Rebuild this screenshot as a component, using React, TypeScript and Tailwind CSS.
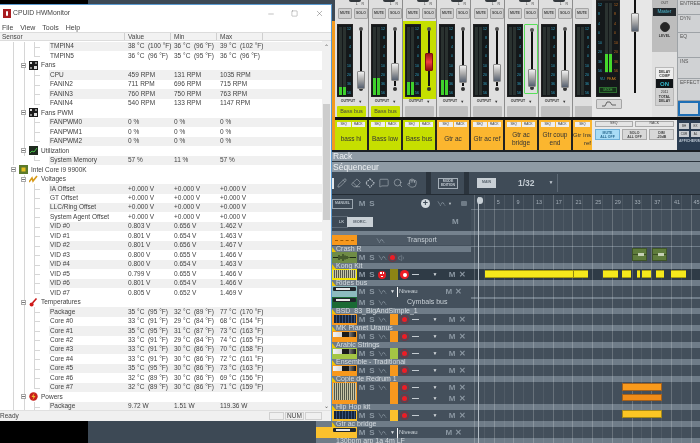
import { Eraser, Hand, MessageSquare, Minus, Pencil, Search, Square, Volume1, X } from 'lucide-react';

type Kind = 'root' | 'group' | 'leaf';

type SensorRow = {
  kind: Kind;
  name: string;
  values?: [string, string, string];
  shaded?: boolean;
  icon?: string;
  noSub?: boolean;
  lastLeaf?: boolean;
};

const t = (a: string, b: string, c: string): [string, string, string] => [a, b, c];

const rows: SensorRow[] = [
  { kind: 'leaf', name: 'TMPIN4', values: t('38 °C  (100 °F)', '36 °C  (96 °F)', '39 °C  (102 °F)'), shaded: true },
  { kind: 'leaf', name: 'TMPIN5', values: t('36 °C  (96 °F)', '35 °C  (95 °F)', '36 °C  (96 °F)'), lastLeaf: true },
  { kind: 'group', name: 'Fans', icon: 'chip' },
  { kind: 'leaf', name: 'CPU', values: t('459 RPM', '131 RPM', '1035 RPM'), shaded: true },
  { kind: 'leaf', name: 'FANIN2', values: t('711 RPM', '696 RPM', '715 RPM') },
  { kind: 'leaf', name: 'FANIN3', values: t('760 RPM', '750 RPM', '763 RPM'), shaded: true },
  { kind: 'leaf', name: 'FANIN4', values: t('540 RPM', '133 RPM', '1147 RPM'), lastLeaf: true },
  { kind: 'group', name: 'Fans PWM', icon: 'chip' },
  { kind: 'leaf', name: 'FANPWM0', values: t('0 %', '0 %', '0 %'), shaded: true },
  { kind: 'leaf', name: 'FANPWM1', values: t('0 %', '0 %', '0 %') },
  { kind: 'leaf', name: 'FANPWM2', values: t('0 %', '0 %', '0 %'), shaded: true, lastLeaf: true },
  { kind: 'group', name: 'Utilization', icon: 'util' },
  { kind: 'leaf', name: 'System Memory', values: t('57 %', '11 %', '57 %'), shaded: true, noSub: true, lastLeaf: true },
  { kind: 'root', name: 'Intel Core i9 9900K', icon: 'cpu', noSub: true },
  { kind: 'group', name: 'Voltages', icon: 'volt' },
  { kind: 'leaf', name: 'IA Offset', values: t('+0.000 V', '+0.000 V', '+0.000 V'), shaded: true },
  { kind: 'leaf', name: 'GT Offset', values: t('+0.000 V', '+0.000 V', '+0.000 V') },
  { kind: 'leaf', name: 'LLC/Ring Offset', values: t('+0.000 V', '+0.000 V', '+0.000 V'), shaded: true },
  { kind: 'leaf', name: 'System Agent Offset', values: t('+0.000 V', '+0.000 V', '+0.000 V') },
  { kind: 'leaf', name: 'VID #0', values: t('0.803 V', '0.656 V', '1.462 V'), shaded: true },
  { kind: 'leaf', name: 'VID #1', values: t('0.801 V', '0.654 V', '1.463 V') },
  { kind: 'leaf', name: 'VID #2', values: t('0.801 V', '0.656 V', '1.467 V'), shaded: true },
  { kind: 'leaf', name: 'VID #3', values: t('0.800 V', '0.655 V', '1.466 V') },
  { kind: 'leaf', name: 'VID #4', values: t('0.800 V', '0.654 V', '1.463 V'), shaded: true },
  { kind: 'leaf', name: 'VID #5', values: t('0.799 V', '0.655 V', '1.466 V') },
  { kind: 'leaf', name: 'VID #6', values: t('0.801 V', '0.654 V', '1.466 V'), shaded: true },
  { kind: 'leaf', name: 'VID #7', values: t('0.805 V', '0.652 V', '1.469 V'), lastLeaf: true },
  { kind: 'group', name: 'Temperatures', icon: 'temp' },
  { kind: 'leaf', name: 'Package', values: t('35 °C  (95 °F)', '32 °C  (89 °F)', '77 °C  (170 °F)'), shaded: true },
  { kind: 'leaf', name: 'Core #0', values: t('33 °C  (91 °F)', '29 °C  (84 °F)', '68 °C  (154 °F)') },
  { kind: 'leaf', name: 'Core #1', values: t('35 °C  (95 °F)', '31 °C  (87 °F)', '73 °C  (163 °F)'), shaded: true },
  { kind: 'leaf', name: 'Core #2', values: t('33 °C  (91 °F)', '29 °C  (84 °F)', '74 °C  (165 °F)') },
  { kind: 'leaf', name: 'Core #3', values: t('33 °C  (91 °F)', '30 °C  (86 °F)', '70 °C  (158 °F)'), shaded: true },
  { kind: 'leaf', name: 'Core #4', values: t('33 °C  (91 °F)', '30 °C  (86 °F)', '72 °C  (161 °F)') },
  { kind: 'leaf', name: 'Core #5', values: t('35 °C  (95 °F)', '30 °C  (86 °F)', '73 °C  (163 °F)'), shaded: true },
  { kind: 'leaf', name: 'Core #6', values: t('32 °C  (89 °F)', '30 °C  (86 °F)', '69 °C  (156 °F)') },
  { kind: 'leaf', name: 'Core #7', values: t('32 °C  (89 °F)', '30 °C  (86 °F)', '71 °C  (159 °F)'), shaded: true, lastLeaf: true },
  { kind: 'group', name: 'Powers', icon: 'power' },
  { kind: 'leaf', name: 'Package', values: t('9.72 W', '1.51 W', '119.36 W'), shaded: true },
];

const SensorIcon = ({ name }: { name?: string }) => {
  if (name === 'chip')
    return (
      <svg width="9" height="9" viewBox="0 0 9 9">
        <rect width="9" height="9" fill="#1c1c1c" />
        <rect x="1" y="1" width="2" height="2" fill="#dcdcdc" />
        <rect x="6" y="1" width="2" height="2" fill="#8c8c8c" />
        <rect x="1" y="6" width="2" height="2" fill="#8c8c8c" />
        <rect x="5" y="5" width="3" height="3" fill="#dcdcdc" />
      </svg>
    );
  if (name === 'util')
    return (
      <svg width="9" height="9" viewBox="0 0 9 9">
        <rect width="9" height="9" fill="#1f2a1f" />
        <path d="M1 7 L3 5 L5 6 L8 2" stroke="#46c046" fill="none" />
      </svg>
    );
  if (name === 'cpu')
    return (
      <svg width="9" height="9" viewBox="0 0 9 9">
        <rect width="9" height="9" fill="#5c7a2c" />
        <rect x="2.5" y="2.5" width="4" height="4" fill="#e8c020" />
      </svg>
    );
  if (name === 'volt')
    return (
      <svg width="9" height="9" viewBox="0 0 9 9">
        <path d="M0 7 L3 3 L4 6 L8 1" stroke="#d89a18" strokeWidth="1.6" fill="none" />
      </svg>
    );
  if (name === 'temp')
    return (
      <svg width="9" height="9" viewBox="0 0 9 9">
        <path d="M7.5 0.5 L3.5 5" stroke="#c81818" strokeWidth="1.6" />
        <circle cx="2.6" cy="6.4" r="2" fill="#d01818" />
      </svg>
    );
  return (
    <svg width="9" height="9" viewBox="0 0 9 9">
      <circle cx="4.5" cy="4.5" r="4.2" fill="#c8201c" />
      <path d="M5.5 1 L2.5 5 H4.5 L3.5 8 L6.5 4 H4.5 Z" fill="#f4c430" />
    </svg>
  );
};

const ExpandBox = () => (
  <span className="flex h-[5px] w-[5px] items-center justify-center border border-[#a8a8a8] bg-white">
    <span className="h-px w-[3px] bg-[#777]" />
  </span>
);

const kindWidths: Record<Kind, { tree: string; name: string }> = {
  root: { tree: 'w-[30px]', name: 'w-[98px]' },
  group: { tree: 'w-[40px]', name: 'w-[88px]' },
  leaf: { tree: 'w-[49px]', name: 'w-[79px]' },
};

const SensorLine = ({ row }: { row: SensorRow }) => {
  const w = kindWidths[row.kind];
  return (
    <div className="flex h-[9.47px] items-center">
      <div className={`relative h-full shrink-0 ${w.tree}`}>
        {row.kind !== 'root' && <span className="absolute left-[13px] top-0 h-full w-px bg-[#d6d6d6]" />}
        {row.kind === 'root' && <span className="absolute left-[13px] top-1/2 h-1/2 w-px bg-[#d6d6d6]" />}
        {!row.noSub && <span className="absolute left-[24px] top-0 h-full w-px bg-[#d6d6d6]" />}
        {row.kind === 'leaf' && (
          <>
            <span className={`absolute left-[34px] top-0 w-px bg-[#d6d6d6] ${row.lastLeaf ? 'h-1/2' : 'h-full'}`} />
            <span className="absolute left-[34px] top-1/2 h-px w-[6px] bg-[#d6d6d6]" />
          </>
        )}
        {row.kind === 'group' && (
          <>
            <span className="absolute left-[21px] top-[2px]"><ExpandBox /></span>
            <span className="absolute left-[29px] top-0"><SensorIcon name={row.icon} /></span>
          </>
        )}
        {row.kind === 'root' && (
          <>
            <span className="absolute left-[11px] top-[2px]"><ExpandBox /></span>
            <span className="absolute left-[19px] top-0"><SensorIcon name={row.icon} /></span>
          </>
        )}
      </div>
      <div className={`flex h-full flex-1 items-center whitespace-pre ${row.shaded ? 'bg-[#f0f0f0]' : ''}`}>
        <span className={`shrink-0 pl-px ${w.name}`}>{row.name}</span>
        {row.values?.map((v, i) => (
          <span key={i} className="w-[46px] shrink-0 overflow-visible">{v}</span>
        ))}
      </div>
    </div>
  );
};

const HwMonitor = () => (
  <div className="absolute left-0 top-[4px] flex h-[417px] w-[332px] flex-col overflow-hidden border-r border-t border-[#5a9ad0] bg-white font-['Liberation_Sans',sans-serif] text-[6.5px] leading-none text-[#3f3f3f]">
    <div className="flex h-[17px] shrink-0 items-center pl-[3px]">
      <span className="flex h-[9px] w-[8px] items-center justify-center bg-[#a81c20]">
        <span className="h-[5px] w-[2px] rounded-full bg-white" />
      </span>
      <span className="ml-[2px] flex-1 text-[6.8px] text-[#444]">CPUID HWMonitor</span>
      <Minus size={8} strokeWidth={1} className="mr-[16px] text-[#444]" />
      <Square size={7} strokeWidth={1} className="mr-[17px] text-[#444]" />
      <X size={9} strokeWidth={1} className="mr-[7px] text-[#444]" />
    </div>
    <div className="flex h-[10px] shrink-0 items-center gap-[7px] pl-[2px] text-[7px] text-[#444]">
      <span>File</span>
      <span>View</span>
      <span>Tools</span>
      <span>Help</span>
    </div>
    <div className="flex h-[9px] shrink-0 items-center border-y border-[#dcdcdc] bg-[#f2f2f2] text-[#444]">
      <span className="h-full w-[125px] border-r border-[#cfcfcf] pl-[2px] leading-[7px]">Sensor</span>
      <span className="h-full w-[46px] border-r border-[#cfcfcf] pl-[3px] leading-[7px]">Value</span>
      <span className="h-full w-[46px] border-r border-[#cfcfcf] pl-[3px] leading-[7px]">Min</span>
      <span className="h-full w-[46px] border-r border-[#cfcfcf] pl-[3px] leading-[7px]">Max</span>
    </div>
    <div className="flex min-h-0 flex-1">
      <div className="min-w-0 flex-1 overflow-hidden pt-px">
        {rows.map((row, i) => (
          <SensorLine key={i} row={row} />
        ))}
      </div>
      <div className="flex w-[9px] shrink-0 flex-col items-center bg-[#f0f0f0] text-[#555]">
        <span className="mt-[3px] h-[60px] text-[6px]">⌃</span>
        <span className="h-[116px] w-[7px] bg-[#cdcdcd]" />
        <span className="mt-auto mb-px text-[6px]">⌄</span>
      </div>
    </div>
    <div className="flex h-[11px] shrink-0 items-center border-t border-[#e0e0e0] bg-[#f0f0f0] text-[#444]">
      <span className="flex-1">Ready</span>
      <span className="h-[8px] w-[15px] border border-[#d0d0d0]" />
      <span className="ml-px flex h-[8px] w-[19px] items-center justify-center border border-[#d0d0d0]">NUM</span>
      <span className="ml-px mr-[9px] h-[8px] w-[17px] border border-[#d0d0d0]" />
    </div>
  </div>
);

type Channel = {
  label: string;
  lines: string[];
  accent: 'lime' | 'orange';
  knob: number;
  level: number;
  tag?: string;
  selected?: boolean;
  red?: boolean;
  outlined?: boolean;
};

const channels: Channel[] = [
  { label: 'bass hi', lines: ['bass hi'], accent: 'lime', knob: 47, level: 8, tag: 'Bass bus' },
  { label: 'Bass low', lines: ['Bass low'], accent: 'lime', knob: 39, level: 17, tag: 'Bass bus' },
  { label: 'Bass bus', lines: ['Bass bus'], accent: 'lime', knob: 29, level: 13, selected: true, red: true },
  { label: 'Gtr ac', lines: ['Gtr ac'], accent: 'orange', knob: 41, level: 15 },
  { label: 'Gtr ac ref', lines: ['Gtr ac ref'], accent: 'orange', knob: 40, level: 0 },
  { label: 'Gtr ac bridge', lines: ['Gtr ac', 'bridge'], accent: 'orange', knob: 44, level: 0, outlined: true },
  { label: 'Gtr coup end', lines: ['Gtr coup', 'end'], accent: 'orange', knob: 46, level: 0 },
];

const scale = ['12', '8', '4', '0', '10', '20', '36', '56'];

const TinyBtn = ({ children }: { children: string }) => (
  <span className="flex h-[11px] w-[14px] shrink-0 items-center justify-center rounded-[1px] border border-[#a5a5a5] bg-[#cfcfcf] text-[3.5px] font-bold text-[#444]">
    {children}
  </span>
);

const MeterBox = ({ level }: { level: number }) => (
  <div className="flex h-[73px] w-[16px] shrink-0 justify-between border border-[#222] bg-[#14181a] px-px pb-px pt-[2px]">
    <div className="flex gap-px self-stretch">
      {[0, 1].map((b) => (
        <div key={b} className="flex w-[3px] flex-col justify-end bg-[#2a3230]">
          <div className="bg-[#3fd12c]" style={{ height: level }} />
        </div>
      ))}
    </div>
    <div className="flex flex-col justify-between text-right text-[3.5px] leading-[4px] text-[#2fa8cc]">
      {scale.map((s, i) => (
        <span key={i}>{s}</span>
      ))}
    </div>
  </div>
);

const Strip = ({ ch }: { ch: Channel }) => {
  const panelBg = ch.accent === 'lime' ? 'bg-[#c6df00]' : 'bg-[#fbb62f]';
  return (
    <div className="flex h-[150px] w-[34px] shrink-0 flex-col">
      <div className="flex h-[117px] flex-col border-r border-[#8d8d8d] bg-[#dfdfdf]">
        <div className="relative flex h-[8px] items-start justify-end pr-[4px]">
          <span className="absolute left-[14px] top-0 h-[2px] w-[12px] rounded-b-full bg-[#33383c]" />
          <span className="mt-[2px] text-[3.5px] leading-[4px] text-[#444]">L&nbsp;&nbsp;&nbsp;&nbsp;R</span>
        </div>
        <div className="flex h-[13px] items-start gap-[2px] pl-[3px]">
          <TinyBtn>MUTE</TinyBtn>
          <TinyBtn>SOLO</TinyBtn>
        </div>
        <div className={`flex h-[78px] gap-[1px] py-[3px] pl-[2px] ${ch.selected ? 'bg-[#c6df00]' : ''}`}>
          <MeterBox level={ch.level} />
          <div className={`relative h-[70px] w-[14px] ${ch.outlined ? 'rounded-[1px] border border-[#59e05a]' : ''}`}>
            <span className="absolute left-[6px] top-[6px] h-[56px] w-[2px] bg-[#111]" />
            <span className="absolute left-[5px] top-[3px] h-[4px] w-[4px] rounded-full bg-[#555]" />
            <span className="absolute bottom-[3px] left-[5px] h-[4px] w-[4px] rounded-full bg-[#333]" />
            <span
              className={`absolute left-[3px] h-[18px] w-[8px] rounded-[1px] border ${
                ch.red
                  ? 'border-[#801010] bg-gradient-to-b from-[#a01818] via-[#f04040] to-[#901010]'
                  : 'border-[#8a8a8a] bg-gradient-to-b from-[#f0f0f0] via-[#a8a8a8] to-[#566070]'
              }`}
              style={{ top: ch.knob }}
            />
          </div>
        </div>
        <div className="flex h-[6px] items-center justify-center gap-[3px] text-[3.5px] font-bold text-[#333]">
          <span>OUTPUT</span>
          <span className="text-[4px]">▼</span>
        </div>
        <div className={`mx-[2px] mt-px flex h-[11px] w-[29px] items-center justify-center rounded-[1px] text-[5.5px] text-[#444] ${ch.tag ? 'bg-[#c6df00]' : 'bg-[#bfbfbf]'}`}>
          {ch.tag}
        </div>
      </div>
      <div className="h-[3px] bg-[#111]" />
      <div className={`flex h-[30px] flex-col border-r-2 border-[#222] px-[2px] pt-[2px] ${panelBg}`}>
        <div className="flex gap-px">
          <span className="flex h-[5px] flex-1 items-center justify-center bg-[#eeeeee] text-[3px] text-[#333]">SEQ</span>
          <span className="flex h-[5px] flex-1 items-center justify-center bg-[#eeeeee] text-[3px] text-[#333]">RACK</span>
        </div>
        <div className="flex flex-1 flex-col items-center justify-center whitespace-nowrap text-center text-[6.5px] leading-[8px] text-[#333]">
          {ch.lines.map((line) => (
            <span key={line}>{line}</span>
          ))}
        </div>
      </div>
    </div>
  );
};

// Last strip: the master section covers most of it, only its left part shows
const CutStrip = () => (
  <div className="flex h-[150px] w-[19px] shrink-0 flex-col">
    <div className="flex h-[117px] flex-col bg-[#dfdfdf] pl-[2px]">
      <div className="h-[8px]" />
      <div className="h-[13px]">
        <TinyBtn>MUTE</TinyBtn>
      </div>
      <div className="h-[78px] py-[3px]">
        <MeterBox level={0} />
      </div>
      <div className="mt-[7px] h-[11px] w-[17px] bg-[#bfbfbf]" />
    </div>
    <div className="h-[3px] bg-[#111]" />
    <div className="flex h-[30px] flex-col bg-[#fbb62f] pl-[2px] pt-[2px]">
      <span className="flex h-[5px] w-[15px] items-center justify-center bg-[#eeeeee] text-[3px] text-[#333]">SEQ</span>
      <div className="flex flex-1 flex-col items-end justify-center whitespace-nowrap pr-px text-[6px] leading-[8px] text-[#333]">
        <span>Gtr Ins</span>
        <span>ref</span>
      </div>
    </div>
  </div>
);

const MasterMeter = () => (
  <div className="flex h-[97px] w-[24px] flex-col border border-[#222] bg-[#14181a]">
    <div className="flex h-[72px] justify-between px-px pt-[2px]">
      <div className="flex flex-col justify-between text-[3.5px] leading-[4px] text-[#2fa8cc]">
        {scale.map((s, i) => (
          <span key={i}>{s}</span>
        ))}
      </div>
      <div className="flex gap-px">
        {[0, 1].map((b) => (
          <div key={b} className="flex w-[3px] flex-col justify-end bg-[#2a3230]">
            <div className="h-[18px] bg-[#45d82c]" />
            <div className="h-[1px]" />
          </div>
        ))}
      </div>
      <div className="flex flex-col justify-between text-[3.5px] leading-[4px] text-[#c46c1e]">
        {scale.map((s, i) => (
          <span key={i}>{s}</span>
        ))}
      </div>
    </div>
    <div className="flex h-[14px] items-center justify-center gap-[2px] text-[3.5px]">
      <span className="text-[#2fa8cc]">VU</span>
      <span className="text-[#d08020]">PEAK</span>
    </div>
    <div className="mx-[2px] flex h-[6px] items-center justify-center border border-[#2d6b30] bg-[#16301a] text-[3px] text-[#53c153]">MODE</div>
  </div>
);

const MasterSection = () => (
  <div className="flex h-[150px] w-[85px] shrink-0 flex-col">
    <div className="flex h-[117px] bg-[#e7e7e7]">
      <div className="flex w-[34px] flex-col pl-[4px]">
        <MasterMeter />
        <div className="mt-[2px] flex h-[10px] w-[26px] items-center justify-center rounded-[1px] border border-[#a5a5a5] bg-[#d8d8d8]">
          <svg width="14" height="6" viewBox="0 0 14 6">
            <path d="M0 5 H3 L5 1 H8 L10 4 H14" stroke="#444" strokeWidth="0.8" fill="none" />
          </svg>
        </div>
      </div>
      <div className="relative w-[26px]">
        <span className="absolute left-[8px] top-0 h-[93px] w-[2px] bg-[#111]" />
        <span className="absolute left-[5px] top-[13px] h-[19px] w-[8px] rounded-[1px] border border-[#8a8a8a] bg-gradient-to-b from-[#f0f0f0] via-[#a8a8a8] to-[#566070]" />
      </div>
      <div className="flex w-[25px] flex-col items-center bg-[#bdbdbd] text-[3.5px] text-[#333]">
        <div className="flex h-[52px] w-full flex-col items-center bg-[#bdbdbd]">
          <span className="h-[8px] leading-[7px]">OUT</span>
          <span className="flex h-[8px] w-[23px] items-center justify-center bg-[#22282c] text-[4.5px] text-[#4fc0d8]">Master</span>
          <span className="mt-[6px] h-[10px] w-[10px] rounded-full border border-[#333] bg-[#262626]" />
          <span className="mt-[2px] font-bold">LEVEL</span>
        </div>
        <div className="flex h-[65px] w-full flex-col items-center bg-[#e0e0e0] pt-[15px]">
          <div className="flex w-[19px] flex-col items-center border border-[#b8b8b8] bg-[#d0d0d0] text-center leading-[4px]">
            <span className="flex h-[11px] w-full items-center justify-center bg-[#eeeeee] font-bold">DELAY<br />COMP</span>
            <span className="flex h-[9px] w-full items-center justify-center bg-[#101417] text-[6px] font-bold text-[#33b8cc]">ON</span>
            <span className="mt-[2px]">2011</span>
            <span className="mt-px mb-[2px] font-bold">TOTAL<br />DELAY</span>
          </div>
        </div>
      </div>
    </div>
    <div className="h-[3px] bg-[#111]" />
    <div className="flex h-[30px] flex-col gap-[2px] bg-[#e9e9e9] px-[3px] pt-px text-[3.5px] text-[#444]">
      <div className="flex gap-[2px]">
        <span className="flex h-[6px] w-[38px] items-center justify-center border border-[#aaa] bg-[#e4e4e4]">SEQ</span>
        <span className="flex h-[6px] w-[40px] items-center justify-center border border-[#aaa] bg-[#e4e4e4]">RACK</span>
      </div>
      <div className="flex gap-[2px] text-center font-bold leading-[4px]">
        <span className="flex h-[11px] w-[25px] items-center justify-center border border-[#6fb0d8] bg-[#a8dcf6] text-[#2a6a90]">MUTE<br />ALL OFF</span>
        <span className="flex h-[11px] w-[25px] items-center justify-center border border-[#aaa] bg-[#d8d8d8]">SOLO<br />ALL OFF</span>
        <span className="flex h-[11px] w-[25px] items-center justify-center border border-[#aaa] bg-[#d8d8d8]">DIM<br />-20dB</span>
      </div>
    </div>
  </div>
);

const sendBoxes = [
  { name: 'ENTREE', h: 'h-[14px]' },
  { name: 'DYN', h: 'h-[17px]' },
  { name: 'EQ', h: 'h-[24px]' },
  { name: 'INS', h: 'h-[20px]' },
  { name: 'EFFECT', h: 'h-[21px]' },
];

const RightPanel = () => (
  <div className="flex h-[150px] w-[23px] shrink-0 flex-col bg-[#c6c9cb] text-[5px] text-[#555]">
    <div className="flex h-[117px] flex-col gap-px bg-[#9ea3a7] pl-px">
      {sendBoxes.map((b) => (
        <div key={b.name} className={`${b.h} bg-[#d0d2d4] pl-[2px] leading-[7px]`}>{b.name}</div>
      ))}
      <div className="mb-[1px] flex-1 border-2 border-[#1f6fb5] bg-[#d5d7d8]" />
    </div>
    <div className="h-[3px] bg-[#111]" />
    <div className="flex h-[30px] flex-col gap-[2px] bg-[#2b3d52] pl-[2px] pt-[3px] text-[3px] text-[#333]">
      <div className="flex gap-[2px]">
        <span className="flex h-[6px] w-[10px] items-center justify-center bg-[#c8ccd0]">BH</span>
        <span className="flex h-[6px] w-[9px] items-center justify-center bg-[#c8ccd0]">EX</span>
      </div>
      <div className="flex gap-[2px]">
        <span className="flex h-[6px] w-[10px] items-center justify-center bg-[#c8ccd0]">CUR</span>
        <span className="flex h-[6px] w-[9px] items-center justify-center bg-[#c8ccd0]">AL</span>
      </div>
      <span className="overflow-hidden whitespace-nowrap text-[3.5px] font-bold text-[#b8c4d0]">AFFICHER/M</span>
    </div>
  </div>
);

const AutoIcon = () => (
  <svg width="9" height="7" viewBox="0 0 9 7">
    <path d="M1 1.5 L3.4 5.5 L5.6 2 L8 5.5" stroke="#93a0ab" strokeWidth="0.8" fill="none" strokeDasharray="1.4 0.6" />
  </svg>
);

const MS = () => (
  <>
    <span className="w-[10px] text-center text-[8px] font-bold text-[#8b97a2]">M</span>
    <span className="w-[10px] text-center text-[8px] font-bold text-[#8b97a2]">S</span>
  </>
);

const Rec = () => (
  <span className="flex h-[9px] w-[9px] items-center justify-center rounded-full border border-[#7d2f3c]">
    <span className="h-[5px] w-[5px] rounded-full bg-[#ee1c25]" />
  </span>
);

const MX = () => (
  <>
    <span className="w-[10px] text-center text-[8px] font-bold text-[#8b97a2]">M</span>
    <span className="w-[10px] text-center text-[8px] font-bold text-[#8b97a2]">✕</span>
  </>
);

const InstrumentLane = () => (
  <div className="flex h-[11px] items-center">
    <span className="ml-[1px] flex w-[11px] justify-center"><Rec /></span>
    <span className="ml-[2px] h-px w-[7px] bg-[#c4ccd2]" />
    <span className="ml-[13px] w-[6px] text-center text-[5px] text-[#d8dde1]">▼</span>
    <span className="ml-[9px] flex"><MX /></span>
  </div>
);

type Thumb = 'keys' | 'pattern' | 'wave' | 'dark' | 'slider';

type Track = {
  name?: string;
  color: string;
  thumb: Thumb;
  block?: string;
  type: 'note' | 'bus' | 'label' | 'audio' | 'kong';
  text?: string;
  tall?: boolean;
};

const tracks: Track[] = [
  { name: 'Crash R', color: 'bg-[#6f8c46]', thumb: 'wave', type: 'audio' },
  { name: 'Kong Kit', color: 'bg-[#f2e400]', thumb: 'pattern', type: 'kong' },
  { name: 'Rides bus', color: 'bg-[#8dbbbf]', thumb: 'slider', type: 'bus' },
  { color: 'bg-[#1a6a34]', thumb: 'slider', type: 'label', text: 'Cymbals bus' },
  { name: 'BSD_83_BigAndSimple_1', color: 'bg-[#f7981d]', thumb: 'dark', block: 'bg-[#f7981d]', type: 'note' },
  { name: 'MK Planet Uranus', color: 'bg-[#f7981d]', thumb: 'keys', block: 'bg-[#f7981d]', type: 'note' },
  { name: 'Arabic Strings', color: 'bg-[#a3c644]', thumb: 'keys', block: 'bg-[#a3c644]', type: 'note' },
  { name: 'Ensemble - Traditional', color: 'bg-[#f7981d]', thumb: 'keys', block: 'bg-[#f7981d]', type: 'note' },
  { name: 'Copie  de Redrum 1', color: 'bg-[#f7981d]', thumb: 'pattern', block: 'bg-[#f7981d]', type: 'note', tall: true },
  { name: 'Hip Hop kit', color: 'bg-[#fbc12d]', thumb: 'dark', block: 'bg-[#fbc12d]', type: 'note' },
  { name: 'Gtr ac bridge', color: 'bg-[#fbc12d]', thumb: 'slider', type: 'bus' },
];

const ThumbInner = ({ kind, tall }: { kind: Thumb; tall?: boolean }) => {
  if (kind === 'wave')
    return (
      <svg width="25" height="11" viewBox="0 0 25 11">
        <path d="M1 5.5 H6 M7 3 V8 M9 4 V7 M11 2 V9 M13 3.5 V7.5 M15 4 V7 M17 5 V6 M18 5.5 H24" stroke="#1d2a14" strokeWidth="1" />
      </svg>
    );
  if (kind === 'keys')
    return (
      <div className="mt-px flex h-[5px] w-[23px] bg-gradient-to-r from-[#f4f4f4] via-[#d0d0d0] to-[#151515]">
        <span className="ml-[9px] h-full w-[7px] bg-[#1a1a1a]" />
      </div>
    );
  if (kind === 'slider')
    return (
      <div className="mt-[1px] flex h-[4px] w-[23px] items-center rounded-[1px] bg-[#20262a]">
        <span className="ml-[3px] h-[2px] w-[14px] bg-[#e8e8e8]" />
      </div>
    );
  if (kind === 'dark')
    return <div className="mt-px h-[8px] w-[22px] bg-[repeating-linear-gradient(90deg,#17253c_0_2px,#36507a_2px_3px)]" />;
  return (
    <div className={`mt-px w-[23px] bg-[repeating-linear-gradient(90deg,#c8c6a8_0_1px,#54584a_1px_2px)] ${tall ? 'h-[17px]' : 'h-[8px]'}`} />
  );
};

const ThumbCell = ({ track }: { track: Track }) => (
  <div className={`flex h-full w-[41px] shrink-0 justify-center pl-[16px] ${track.color}`}>
    <ThumbInner kind={track.thumb} tall={track.tall} />
  </div>
);

const TrackRow = ({ track }: { track: Track }) => (
  <div className={`flex w-full bg-[#44505c] ${track.tall ? 'h-[22px]' : 'h-[11px]'}`}>
    <ThumbCell track={track} />
    <div className="flex h-[11px] items-center">
      <MS />
      <span className="flex w-[10px] justify-center"><AutoIcon /></span>
    </div>
    {track.type === 'note' && (
      <>
        <span className={`ml-[3px] h-full w-[8px] shrink-0 ${track.block}`} />
        <div className="flex flex-col">
          <InstrumentLane />
          {track.tall && <InstrumentLane />}
        </div>
      </>
    )}
    {track.type === 'label' && (
      <span className="ml-[20px] self-center text-[7px] text-[#c8d0d6]">{track.text}</span>
    )}
    {track.type === 'audio' && (
      <div className="flex items-center">
        <span className="flex w-[10px] justify-center"><Rec /></span>
        <Volume1 size={8} strokeWidth={1.5} className="ml-[1px] text-[#8b97a2]" />
      </div>
    )}
    {track.type === 'bus' && (
      <div className="flex h-[11px] items-center">
        <span className="ml-[3px] text-[5px] text-[#d8dde1]">▼</span>
        <span className="ml-[2px] h-[10px] w-px bg-white" />
        <span className="ml-[1px] w-[45px] text-[6px] text-[#c8d0d6]">Niveau</span>
        <MX />
      </div>
    )}
  </div>
);

const KongRow = ({ track }: { track: Track }) => (
  <div className="flex h-[11px] bg-[#2f3b46]">
    <ThumbCell track={track} />
    <div className="flex items-center">
      <MS />
      <span className="flex w-[10px] justify-center">
        <span className="flex h-[8px] w-[8px] flex-wrap items-center justify-center gap-[1px] rounded-full bg-[#e81c24] p-[1px]">
          <span className="h-[1.5px] w-[1.5px] bg-white" />
          <span className="h-[1.5px] w-[1.5px] bg-white" />
          <span className="h-[1.5px] w-[1.5px] bg-white" />
        </span>
      </span>
    </div>
    <span className="ml-[3px] h-full w-[8px] shrink-0 bg-[#8c8414]" />
    <div className="flex h-[11px] items-center">
      <span className="ml-[1px] flex w-[11px] justify-center">
        <span className="flex h-[9px] w-[9px] items-center justify-center rounded-full bg-[#ee1c25]">
          <span className="h-[4px] w-[4px] rounded-full bg-white" />
        </span>
      </span>
      <span className="ml-[2px] h-px w-[7px] bg-[#c4ccd2]" />
      <span className="ml-[13px] w-[6px] text-center text-[5px] text-[#d8dde1]">▼</span>
      <span className="ml-[9px] flex"><MX /></span>
    </div>
  </div>
);

const TrackList = () => (
  <div className="flex w-[155px] shrink-0 flex-col bg-[#44505c]">
    <div className="flex h-[17px] shrink-0 items-center bg-[#3d4955] pl-[16px]">
      <span className="flex h-[10px] w-[21px] items-center justify-center border border-[#9aa5ae] text-[3.5px] font-bold text-[#b4bec6]">MANUEL</span>
      <span className="w-[4px]" />
      <MS />
      <span className="ml-[44px] flex h-[9px] w-[9px] items-center justify-center rounded-full bg-[#d4dadf] text-[9px] font-bold leading-[9px] text-[#3d4955]">+</span>
      <span className="ml-[7px] flex items-center gap-[2px]">
        <AutoIcon />
        <span className="text-[4px] text-[#c0c8ce]">▼</span>
      </span>
      <span className="ml-[9px] h-[5px] w-[6px] rounded-[1px] bg-[#6f7b86]" />
    </div>
    <div className="flex h-[19px] shrink-0 items-center bg-[#3d4955] pl-[16px] text-[4px] font-bold">
      <span className="flex h-[10px] w-[15px] items-center justify-center pl-[4px] text-[#aeb8c0] outline outline-[#5d6975]">LK</span>
      <span className="flex h-[10px] w-[26px] items-center justify-center bg-[#c9d0d6] text-[#55606b]">MORC.</span>
      <span className="ml-[79px] text-[8px] text-[#8b97a2]">M</span>
    </div>
    <div className="h-[4px] shrink-0 bg-[#75828e]" />
    <div className="flex h-[10px] shrink-0 bg-[#4d5965]">
      <div className="flex w-[41px] items-center justify-center bg-[#f7981d] pl-[16px]">
        <span className="w-[19px] border-t border-dashed border-[#a55c00]" />
      </div>
      <span className="ml-[19px] flex items-center"><AutoIcon /></span>
      <span className="ml-[22px] text-[7px] leading-[10px] text-[#c8d0d6]">Transport</span>
    </div>
    {tracks.map((track, i) => (
      <div key={i} className="shrink-0">
        {track.name && (
          <div className={`relative h-[6px] ${i === 0 ? 'mt-px' : ''} bg-[#6f7c88] pl-[20px] text-[7px] leading-[6px] whitespace-nowrap text-[#d5dbe0]`}>
            <span className="absolute left-[16px] top-[1px] h-0 w-0 border-b-[5px] border-r-[4px] border-b-[#f2c500] border-r-transparent" />
            {track.name}
          </div>
        )}
        {track.type === 'kong' ? <KongRow track={track} /> : <TrackRow track={track} />}
      </div>
    ))}
    <div className="h-[5px] shrink-0 bg-[#6f7c88] pl-[20px] text-[7px] leading-[5px] whitespace-nowrap text-[#d5dbe0]">130bpm arp 1a 4m LF</div>
  </div>
);

const laneBands = [
  { h: 'h-[21px]', band: false },
  { h: 'h-[4px]', band: true },
  { h: 'h-[11px]', band: false },
  { h: 'h-px', band: true },
  { h: 'h-[16px]', band: false },
  { h: 'h-[6px]', band: true },
  { h: 'h-[11px]', band: false, dark: true },
  { h: 'h-[6px]', band: true },
  { h: 'h-[11px]', band: false },
  { h: 'h-[2px]', band: true },
  { h: 'h-[9px]', band: false },
  { h: 'h-[6px]', band: true },
  { h: 'h-[11px]', band: false },
  { h: 'h-[6px]', band: true },
  { h: 'h-[11px]', band: false },
  { h: 'h-[6px]', band: true },
  { h: 'h-[11px]', band: false },
  { h: 'h-[6px]', band: true },
  { h: 'h-[11px]', band: false },
  { h: 'h-[6px]', band: true },
  { h: 'h-[22px]', band: false },
  { h: 'h-[6px]', band: true },
  { h: 'h-[11px]', band: false },
  { h: 'h-[6px]', band: true },
  { h: 'h-[11px]', band: false },
  { h: 'h-[5px]', band: true },
];

type Clip = { left: number; width: number; top: number; height: number; className: string; pad?: boolean };

const kongClip = 'bg-[#f5e81c] border-y border-[#a89e10]';
const clips: Clip[] = [
  { left: 632, width: 15, top: 248, height: 13, className: 'bg-[#5f7c3c] border border-[#3f5527]', pad: true },
  { left: 652, width: 15, top: 248, height: 13, className: 'bg-[#5f7c3c] border border-[#3f5527]', pad: true },
  { left: 485, width: 88, top: 270, height: 8, className: kongClip },
  { left: 573, width: 15, top: 270, height: 8, className: `${kongClip} border-l-[#8f8610] border-l` },
  { left: 603, width: 15, top: 270, height: 8, className: kongClip },
  { left: 622, width: 9, top: 270, height: 8, className: kongClip },
  { left: 637, width: 3, top: 270, height: 8, className: kongClip },
  { left: 642, width: 9, top: 270, height: 8, className: kongClip },
  { left: 656, width: 8, top: 270, height: 8, className: kongClip },
  { left: 671, width: 15, top: 270, height: 8, className: kongClip },
  { left: 622, width: 40, top: 383, height: 8, className: 'bg-[#f99a1c] border border-[#a5601a]' },
  { left: 622, width: 40, top: 394, height: 7, className: 'bg-[#f08c18] border border-[#a5601a]' },
  { left: 622, width: 40, top: 410, height: 8, className: 'bg-[#fbc624] border border-[#a58a1a]' },
];

const Timeline = () => (
  <div className="relative flex min-w-0 flex-1 flex-col bg-[#434f5b]">
    <div className="flex h-[15px] shrink-0 items-start border-b border-[#68747f] bg-[#3d4955] pl-[3px] pt-[3px] text-[5.5px] text-[#a5afb8]">
      {Array.from({ length: 12 }, (_, i) => (
        <span key={i} className="w-[19.7px] shrink-0 pl-[3px]">{1 + i * 4}</span>
      ))}
    </div>
    {laneBands.map((lane, i) => (
      <div
        key={i}
        className={`shrink-0 ${lane.h} ${lane.band ? 'bg-[#6f7c88]' : lane.dark ? 'bg-[#2f3b46]' : 'bg-[#434f5b]'}`}
      />
    ))}
    <div className="absolute inset-0 flex overflow-hidden pl-[3px]">
      {Array.from({ length: 24 }, (_, i) => (
        <span
          key={i}
          className={`h-full w-[9.85px] shrink-0 border-l ${i % 2 === 0 ? 'border-white/20' : 'border-white/[0.07]'}`}
        />
      ))}
    </div>
    <span className="absolute bottom-0 left-[7px] top-[2px] w-px bg-[#b5bec6]" />
    <span className="absolute left-[6px] top-[2px] h-[7px] w-[6px] rounded-full bg-[#c8d0d6]" />
    {clips.map((clip, i) => (
      <span
        key={i}
        className={`absolute flex flex-col justify-center ${clip.className}`}
        style={{ left: clip.left - 471, width: clip.width, top: clip.top - 195, height: clip.height }}
      >
        {clip.pad && (
          <span className="relative h-px w-full bg-[#3c5024]">
            <span className="absolute right-[2px] top-[-1px] h-[3px] w-[6px] bg-[#c5d0b4]" />
          </span>
        )}
      </span>
    ))}
  </div>
);

const Toolbar = () => (
  <div className="flex h-[22px] shrink-0 items-center bg-[#3f4b57] pl-[16px] text-[#c4ccd3]">
    <span className="h-[11px] w-[2px] bg-[#e4e8ea]" />
    <div className="ml-[3px] flex w-[89px] items-center gap-[4px]">
      <Pencil size={10} strokeWidth={1.2} />
      <Eraser size={10} strokeWidth={1.2} />
      <svg width="10" height="10" viewBox="0 0 10 10" className="shrink-0">
        <rect x="2" y="2" width="6" height="6" transform="rotate(45 5 5)" stroke="#c4ccd3" strokeWidth="1" strokeDasharray="1.5 0.8" fill="none" />
      </svg>
      <MessageSquare size={10} strokeWidth={1.2} />
      <Search size={10} strokeWidth={1.2} />
      <Hand size={10} strokeWidth={1.2} />
    </div>
    <span className="h-full w-[5px] bg-[#2b343d]" />
    <span className="ml-[7px] flex h-[11px] w-[20px] items-center justify-center border border-[#a5afb8] text-center text-[3.5px] font-bold leading-[4px]">MODE<br />EDITION</span>
    <span className="ml-[6px] h-full w-[5px] bg-[#2b343d]" />
    <span className="ml-[8px] flex h-[10px] w-[19px] items-center justify-center bg-[#c9d0d6] text-[3.5px] font-bold text-[#55606b]">MAIN</span>
    <span className="ml-[22px] text-[8.5px] font-bold text-[#c4ccd3]">1/32</span>
    <span className="ml-[14px] text-[5px]">▼</span>
    <span className="ml-[3px] h-[18px] w-px bg-[#5d6975]" />
  </div>
);

const Daw = () => (
  <div className="absolute left-[316px] top-0 flex h-[443px] w-[384px] flex-col overflow-hidden bg-[#3d4955] font-['Liberation_Sans',sans-serif]">
    <div className="flex h-[150px] shrink-0">
      <div className="w-[16px] shrink-0" />
      <div className="mt-[21px] h-[129px] w-[3px] shrink-0 bg-[#f29a1e]" />
      {channels.map((ch) => (
        <Strip key={ch.label} ch={ch} />
      ))}
      <CutStrip />
      <MasterSection />
      <RightPanel />
    </div>
    <div className="h-[2px] shrink-0 bg-[#1a1f24]" />
    <div className="h-[9px] shrink-0 bg-[#8f9ba5] pl-[17px] text-[8.5px] leading-[9px] text-[#eef1f3]">Rack</div>
    <div className="h-px shrink-0 bg-[#2b343d]" />
    <div className="h-[10px] shrink-0 bg-[#8f9ba5] pl-[17px] text-[8.5px] leading-[10px] text-[#eef1f3]">Séquenceur</div>
    <Toolbar />
    <div className="h-px shrink-0 bg-[#232b33]" />
    <div className="flex min-h-0 flex-1">
      <TrackList />
      <Timeline />
    </div>
  </div>
);

export default function App() {
  return (
    <div className="relative h-[443px] w-[700px] overflow-hidden bg-black blur-[0.3px]">
      <div className="absolute bottom-0 left-[88px] top-0 w-[240px] bg-[#3d4955]" />
      <Daw />
      <HwMonitor />
    </div>
  );
}
